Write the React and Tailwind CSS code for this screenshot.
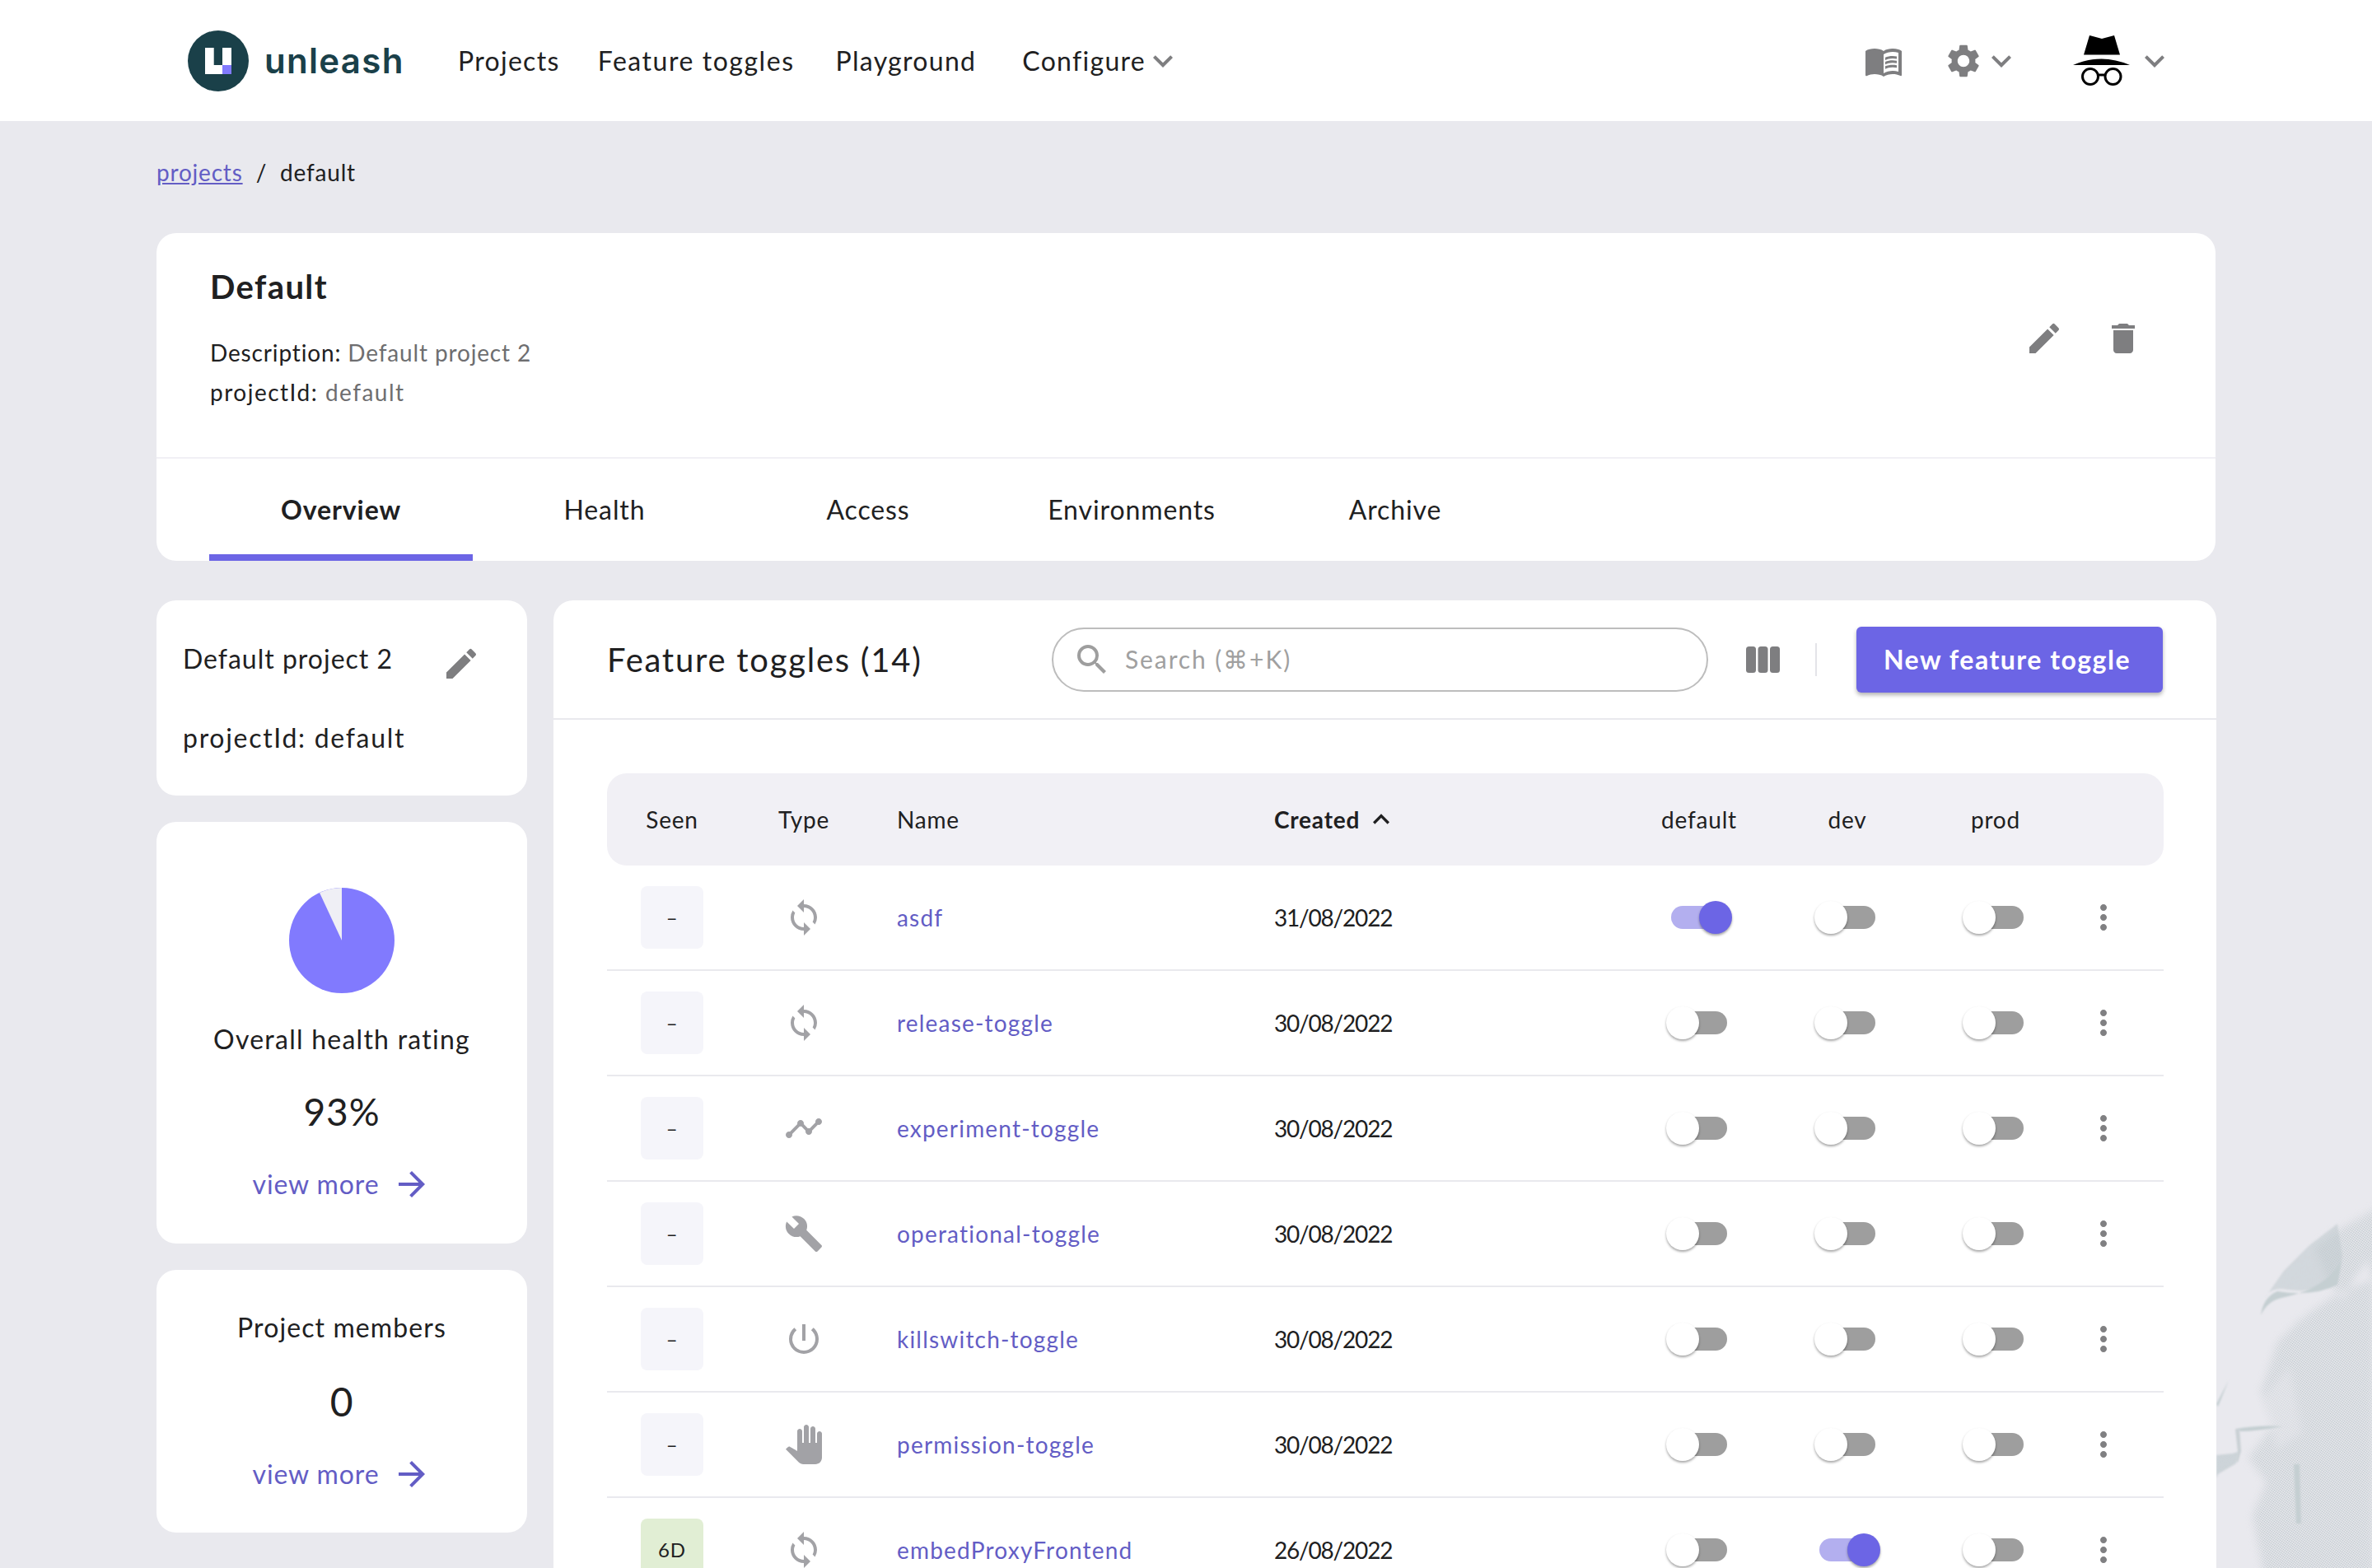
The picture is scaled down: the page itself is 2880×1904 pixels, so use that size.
import {
  MdArrowForward,
  MdBuild,
  MdDelete,
  MdEdit,
  MdKeyboardArrowDown,
  MdKeyboardArrowUp,
  MdLoop,
  MdMenuBook,
  MdMoreVert,
  MdPanTool,
  MdPowerSettingsNew,
  MdSearch,
  MdSettings,
  MdTimeline,
} from 'react-icons/md'

const ROWS = [
  { seen: '–', Icon: MdLoop, name: 'asdf', created: '31/08/2022', on: [true, false, false] },
  { seen: '–', Icon: MdLoop, name: 'release-toggle', created: '30/08/2022', on: [false, false, false] },
  { seen: '–', Icon: MdTimeline, name: 'experiment-toggle', created: '30/08/2022', on: [false, false, false] },
  { seen: '–', Icon: MdBuild, name: 'operational-toggle', created: '30/08/2022', on: [false, false, false] },
  { seen: '–', Icon: MdPowerSettingsNew, name: 'killswitch-toggle', created: '30/08/2022', on: [false, false, false] },
  { seen: '–', Icon: MdPanTool, name: 'permission-toggle', created: '30/08/2022', on: [false, false, false] },
  { seen: '6D', Icon: MdLoop, name: 'embedProxyFrontend', created: '26/08/2022', on: [false, true, false] },
]

const COLS = 'grid grid-cols-[158px_162px_460px_456px_180px_180px_180px_1fr] items-center'

function Logo() {
  return (
    <div className="flex items-center">
      <div className="flex h-[74px] w-[74px] items-center justify-center rounded-full bg-[#1a4049]">
        <svg width="32" height="32" viewBox="0 0 32 32">
          <path d="M0 0H10.7V21H21V0H32V32H0Z" fill="#fff" />
          <rect x="21" y="21" width="11" height="11" fill="#817afe" />
        </svg>
      </div>
      <span className="ml-[19px] w-[168px] text-[42px] font-semibold leading-[60px] text-[#1a4049] font-['Inter',sans-serif]">
        unleash
      </span>
    </div>
  )
}

function Incognito() {
  return (
    <svg width="70" height="61" viewBox="0 0 70 61">
      <path d="M13 23.5L20 0L35 4L50 0L57 23.5Z" fill="#000" />
      <path d="M0 36Q34.5 21 69 36Z" fill="#000" />
      <circle cx="21" cy="50" r="9.5" fill="none" stroke="#000" strokeWidth="3" />
      <circle cx="48.5" cy="50" r="9.5" fill="none" stroke="#000" strokeWidth="3" />
      <path d="M30 48H40" stroke="#000" strokeWidth="3" />
    </svg>
  )
}

function NavBar() {
  return (
    <nav className="flex h-[147px] items-center bg-white pl-[228px] pr-[240px] text-[32px] leading-[48px] tracking-[1.3px] text-[#202021]">
      <Logo />
      <a className="ml-[67px]">Projects</a>
      <a className="ml-[46px] tracking-[1.55px]">Feature toggles</a>
      <a className="ml-[50px]">Playground</a>
      <a className="ml-[56px]">Configure</a>
      <MdKeyboardArrowDown className="-ml-[3px] text-[#7e7e80]" size={48} />
      <div className="ml-auto flex items-center">
        <MdMenuBook className="text-[#7e7e80]" size={48} />
        <MdSettings className="ml-[49px] text-[#7e7e80]" size={48} />
        <MdKeyboardArrowDown className="-ml-[2px] text-[#7e7e80]" size={48} />
        <div className="ml-[63px]"><Incognito /></div>
        <MdKeyboardArrowDown className="ml-[5px] text-[#7e7e80]" size={48} />
      </div>
    </nav>
  )
}

function ProjectHeader() {
  const tabs = ['Overview', 'Health', 'Access', 'Environments', 'Archive']
  return (
    <section className="overflow-hidden rounded-[24px] bg-white">
      <div className="flex h-[274px] justify-between border-b-2 border-[#f1f0f5] pl-[65px] pr-[88px] pt-[41px]">
        <div>
          <h1 className="text-[40px] font-bold leading-[48px] tracking-[1.4px] text-[#202021]">Default</h1>
          <p className="mt-[32px] text-[28px] leading-[48px] tracking-[0.85px] text-[#202021]">
            Description: <span className="text-[#6e6e70]">Default project 2</span>
          </p>
          <p className="text-[28px] leading-[48px] tracking-[1.5px] text-[#202021]">
            projectId: <span className="text-[#6e6e70]">default</span>
          </p>
        </div>
        <div className="mt-[63px] flex h-[48px] gap-[48px] text-[#7e7e80]">
          <MdEdit size={48} />
          <MdDelete size={48} />
        </div>
      </div>
      <div className="flex h-[124px] pl-[64px]">
        {tabs.map((t, i) => (
          <div
            key={t}
            className={`flex w-[320px] items-center justify-center border-y-[8px] border-t-transparent text-[32px] tracking-[0.9px] text-[#202021] ${i === 0 ? 'border-b-[#6c65e5] font-bold' : 'border-b-transparent'}`}
          >
            {t}
          </div>
        ))}
      </div>
    </section>
  )
}

function ViewMore() {
  return (
    <a className="flex h-[48px] items-center justify-center gap-[15px] text-[32px] leading-[48px] tracking-[0.9px] text-[#635dc5]">
      view more
      <MdArrowForward size={48} />
    </a>
  )
}

function Sidebar() {
  return (
    <aside className="flex w-[450px] shrink-0 flex-col gap-[32px] text-[32px] tracking-[0.9px] text-[#202021]">
      <div className="rounded-[24px] bg-white pb-[46px] pl-[32px] pr-[56px] pt-[47px]">
        <div className="flex h-[48px] items-start justify-between leading-[48px]">
          <span className="tracking-[1px]">Default project 2</span>
          <MdEdit className="mt-[6px] text-[#7e7e80]" size={48} />
        </div>
        <p className="mt-[48px] leading-[48px] tracking-[1.7px]">projectId: default</p>
      </div>
      <div className="flex flex-col items-center rounded-[24px] bg-white pb-[48px] pt-[80px]">
        <svg width="128" height="128" viewBox="0 0 128 128">
          <circle cx="64" cy="64" r="64" fill="#817afe" />
          <path d="M64 64L37 6A64 64 0 0 1 64 0Z" fill="#efeff5" />
        </svg>
        <p className="mt-[32px] leading-[48px] tracking-[1.25px]">Overall health rating</p>
        <p className="mt-[32px] text-[46px] leading-[64px]">93%</p>
        <div className="mt-[32px]"><ViewMore /></div>
      </div>
      <div className="flex flex-col items-center rounded-[24px] bg-white pb-[47px] pt-[46px]">
        <p className="leading-[48px] tracking-[1.1px]">Project members</p>
        <p className="mt-[34px] text-[48px] leading-[64px]">0</p>
        <div className="mt-[32px]"><ViewMore /></div>
      </div>
    </aside>
  )
}

function Toggle({ on }) {
  return (
    <div className="relative h-[40px] w-[80px]">
      <div className={`absolute left-[6px] top-[6px] h-[28px] w-[68px] rounded-full ${on ? 'bg-[#b3afef]' : 'bg-[#9e9e9e]'}`} />
      <div
        className={`absolute top-0 h-[40px] w-[40px] rounded-full shadow-[0_2px_3px_rgba(0,0,0,0.35)] ${on ? 'left-[40px] bg-[#6c65e5]' : 'left-0 bg-white'}`}
      />
    </div>
  )
}

function ToggleTable() {
  return (
    <div className="ml-[65px] mr-[64px] mt-[65px] text-[28px] tracking-[0.8px] text-[#202021]">
      <div className={`${COLS} h-[112px] rounded-[24px] bg-[#f1f0f5]`}>
        <span className="text-center">Seen</span>
        <span className="text-center">Type</span>
        <span className="pl-[32px]">Name</span>
        <span className="flex items-center pl-[30px] font-bold">
          Created
          <MdKeyboardArrowUp className="ml-[6px]" size={40} />
        </span>
        <span className="text-center">default</span>
        <span className="text-center">dev</span>
        <span className="text-center">prod</span>
        <span />
      </div>
      {ROWS.map(r => (
        <div key={r.name} className={`${COLS} h-[128px] border-b-2 border-[#e9e9ee]`}>
          <div className="flex justify-center">
            <div className={`flex h-[76px] w-[76px] items-center justify-center rounded-[8px] text-[24px] ${r.seen === '6D' ? 'bg-[#e1eed4]' : 'bg-[#f5f5fa]'}`}>
              {r.seen}
            </div>
          </div>
          <div className="flex justify-center text-[#a2a2a6]"><r.Icon size={48} /></div>
          <a className="pl-[32px] tracking-[1.2px] text-[#635dc5]">{r.name}</a>
          <span className="pl-[30px] tracking-[-1.2px]">{r.created}</span>
          {r.on.map((on, i) => (
            <div key={i} className="flex justify-center"><Toggle on={on} /></div>
          ))}
          <div className="pl-[17px] text-[#808082]"><MdMoreVert size={48} /></div>
        </div>
      ))}
    </div>
  )
}

function FeatureToggles() {
  return (
    <section className="flex-1 rounded-[24px] bg-white">
      <div className="flex h-[145px] items-center border-b-2 border-[#e9e9ee] pl-[65px] pr-[65px]">
        <h2 className="w-[540px] text-[40px] tracking-[1.75px] text-[#202021]">Feature toggles (14)</h2>
        <div className="flex h-[78px] w-[797px] items-center rounded-[39px] border-2 border-[#bdbdbd] pl-[23px]">
          <MdSearch className="text-[#9e9e9e]" size={48} />
          <span className="ml-[16px] text-[30px] tracking-[1.9px] text-[#a0a0a0]">Search (⌘+K)</span>
        </div>
        <svg className="ml-[46px]" width="41" height="32" viewBox="0 0 41 32">
          <rect x="0" y="0" width="12" height="32" rx="3.5" fill="#7e7e80" />
          <rect x="14.5" y="0" width="12" height="32" rx="3.5" fill="#7e7e80" />
          <rect x="29" y="0" width="12" height="32" rx="3.5" fill="#7e7e80" />
        </svg>
        <div className="ml-[43px] h-[40px] w-[2px] bg-[#e4e4e8]" />
        <button className="ml-[48px] flex h-[80px] w-[372px] items-center justify-center rounded-[6px] bg-[#6c65e5] pr-[6px] text-[32px] font-bold tracking-[1.5px] text-white shadow-[0_3px_5px_rgba(0,0,0,0.3)]">
          New feature toggle
        </button>
      </div>
      <ToggleTable />
    </section>
  )
}

function BackgroundArt() {
  return (
    <svg className="absolute bottom-0 right-0" width="190" height="504" viewBox="30 0 190 504">
      <defs>
        <pattern id="dotsLight" width="2.4" height="2.4" patternUnits="userSpaceOnUse" patternTransform="rotate(35)">
          <circle cx="1.2" cy="1.2" r="0.85" fill="#b9c3c8" />
        </pattern>
        <pattern id="dotsDense" width="2" height="2" patternUnits="userSpaceOnUse" patternTransform="rotate(35)">
          <circle cx="1" cy="1" r="0.9" fill="#bfcace" />
        </pattern>
        <filter id="soft" x="-20%" y="-20%" width="140%" height="140%">
          <feGaussianBlur stdDeviation="5" />
        </filter>
        <filter id="softLine" x="-30%" y="-30%" width="160%" height="160%">
          <feGaussianBlur stdDeviation="1.2" />
        </filter>
        <mask id="faceMask" maskUnits="userSpaceOnUse" x="30" y="0" width="190" height="504">
          <path filter="url(#soft)" fill="#fff" d="M230 65L180 93L150 115L170 160L185 178L200 150L215 130L222 160V520H90L75 440L92 400L70 370L100 330L85 290L105 230L130 205L150 190L180 170L230 150Z" />
          <path filter="url(#soft)" fill="#000" opacity="0.45" d="M120 260L135 340L105 360L85 300Z" />
        </mask>
        <mask id="chinMask" maskUnits="userSpaceOnUse" x="30" y="340" width="60" height="70">
          <path filter="url(#softLine)" fill="#fff" d="M31 367L50 365L58 363L55 377L33 390L31 395Z" />
        </mask>
      </defs>
      <rect x="30" y="0" width="190" height="504" fill="url(#dotsLight)" mask="url(#faceMask)" />
      <rect x="30" y="340" width="60" height="70" fill="url(#dotsDense)" mask="url(#chinMask)" />
      <path fill="url(#dotsDense)" filter="url(#softLine)" d="M90 176Q95 165 110 165Q150 172 178 156L184 125L178 86L143 113L113 143Z" opacity="0.8" />
      <path fill="#c5cfd2" filter="url(#softLine)" d="M85 197Q88 175 105 168Q150 175 178 160L183 130Q165 165 110 176Q93 180 85 197Z" />
      <path fill="#c5cfd2" filter="url(#softLine)" d="M56 335Q80 330 112 332Q80 338 60 338Z" />
      <path fill="#c5cfd2" filter="url(#softLine)" d="M125 378L132 378L134 450L128 450Z" />
      <path fill="#c5cfd2" filter="url(#softLine)" d="M31 305L46 276L33 308Z" />
      <path fill="#c9d0d4" filter="url(#softLine)" d="M54 335L59 335L61 362L57 376L55 374L57 362Z" />
    </svg>
  )
}

export default function App() {
  return (
    <div className="relative h-[1904px] overflow-hidden bg-[#e9e9ee] font-['Lato','Noto_Sans',sans-serif]">
      <BackgroundArt />
      <div className="relative">
        <NavBar />
        <main className="px-[190px]">
          <div className="flex h-[136px] items-center pb-[12px] text-[28px] tracking-[0.8px] text-[#202021]">
            <a className="text-[#635dc5] underline">projects</a>
            <span className="mx-[16px]">/</span>
            <span>default</span>
          </div>
          <ProjectHeader />
          <div className="mt-[48px] flex items-start gap-[32px]">
            <Sidebar />
            <FeatureToggles />
          </div>
        </main>
      </div>
    </div>
  )
}
